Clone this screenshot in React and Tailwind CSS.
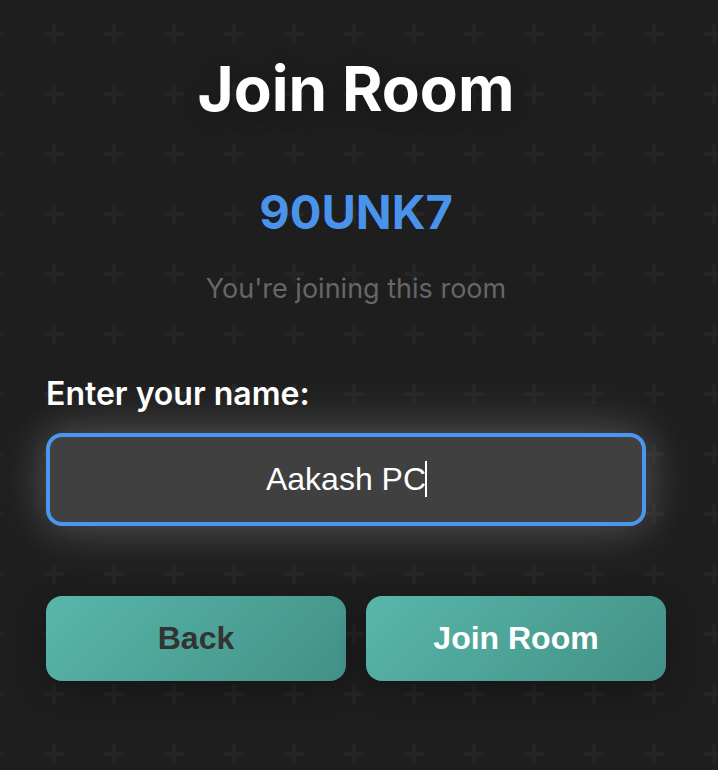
import { useState } from "react";

function PlusPattern() {
  return (
    <svg className="absolute inset-0 -z-10 h-full w-full" aria-hidden="true">
      <defs>
        <pattern id="plus" x="44" y="24" width="60" height="60" patternUnits="userSpaceOnUse">
          <path d="M8 0h4v8h8v4h-8v8H8v-8H0V8h8z" fill="#252525" />
        </pattern>
      </defs>
      <rect width="100%" height="100%" fill="url(#plus)" />
    </svg>
  );
}

function ActionButton({ children, type = "button", tone }) {
  return (
    <button
      type={type}
      className={`h-[85px] flex-1 rounded-2xl bg-linear-[135deg,#58b7a9,#439086] pb-0.5 font-['Liberation_Sans',Arial,sans-serif] text-[32px] font-bold shadow-[0_8px_30px_rgba(0,0,0,0.3)] ${tone}`}
    >
      {children}
    </button>
  );
}

export default function App() {
  const [name, setName] = useState("Aakash PC");

  return (
    <main className="relative isolate min-h-screen overflow-hidden bg-[#1e1e1e] pr-[52px] pl-[46px] font-['Inter',sans-serif] text-white">
      <PlusPattern />
      <header className="flex flex-col items-center pt-[49px] text-center">
        <h1 className="text-[62px] leading-20 font-bold [text-shadow:0_4px_20px_rgba(0,0,0,0.3)]">
          Join Room
        </h1>
        <p className="mt-[55px] text-[47px] leading-14 font-bold text-[#4d9bf8]/95">90UNK7</p>
        <p className="mt-[29px] text-[27px] leading-10 text-[#666666]">You're joining this room</p>
      </header>

      <form className="mt-[61px]" onSubmit={(event) => event.preventDefault()}>
        <label htmlFor="player-name" className="block text-[32px] leading-12 font-semibold">
          Enter your name:
        </label>
        <div className="relative mt-[15px] mr-5">
          <input
            id="player-name"
            type="text"
            value={name}
            onChange={(event) => setName(event.target.value)}
            className="block h-[93px] w-full rounded-2xl border-4 border-[#4a96f0] bg-[#404040] text-center font-['Liberation_Sans',Arial,sans-serif] text-[32px] caret-transparent shadow-[0_0_40px_rgba(255,255,255,0.2),0_0_80px_rgba(255,255,255,0.1)] outline-none"
          />
          <span
            aria-hidden="true"
            className="pointer-events-none absolute top-7 left-1/2 ml-[79px] h-9 w-0.5 bg-white"
          />
        </div>
        <div className="mt-[70px] flex gap-5">
          <ActionButton tone="text-[#333333]">Back</ActionButton>
          <ActionButton type="submit" tone="text-white">Join Room</ActionButton>
        </div>
      </form>
    </main>
  );
}
